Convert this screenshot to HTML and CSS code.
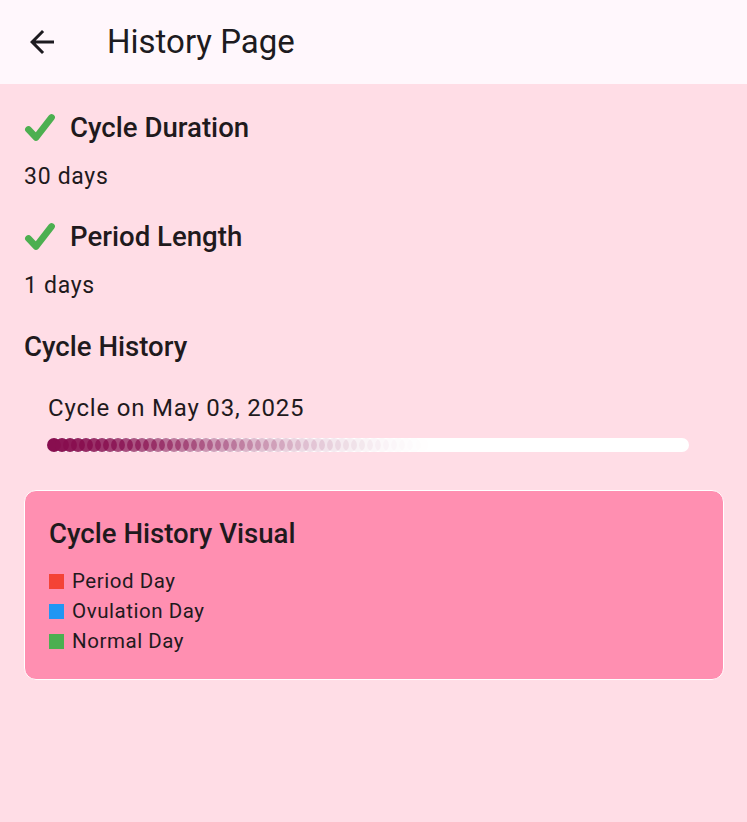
FILE: index.html
```html
<!DOCTYPE html>
<html>
<head>
<meta charset="utf-8">
<link rel="stylesheet" href="styles.css">
</head>
<body>
<header class="appbar">
  <div class="leading">
    <svg class="back" viewBox="0 0 24 24" width="36" height="36"><path d="M20 11H7.83l5.59-5.59L12 4l-8 8 8 8 1.41-1.41L7.83 13H20v-2z" fill="#1d1b20"/></svg>
  </div>
  <h1 class="title">History Page</h1>
</header>
<main class="content">
  <div class="heading-row">
    <svg class="check" viewBox="0 0 32 30" width="32" height="30"><path d="M4.5 16.5 L12 24.5 L27.5 4.5" fill="none" stroke="#4caf50" stroke-width="6.8" stroke-linecap="round" stroke-linejoin="round"/></svg>
    <h2 class="heading">Cycle Duration</h2>
  </div>
  <p class="value">30 days</p>
  <div class="heading-row second">
    <svg class="check" viewBox="0 0 32 30" width="32" height="30"><path d="M4.5 16.5 L12 24.5 L27.5 4.5" fill="none" stroke="#4caf50" stroke-width="6.8" stroke-linecap="round" stroke-linejoin="round"/></svg>
    <h2 class="heading">Period Length</h2>
  </div>
  <p class="value">1 days</p>
  <h2 class="heading section">Cycle History</h2>
  <div class="cycle">
    <p class="cycle-label">Cycle on May 03, 2025</p>
    <svg class="bar" viewBox="0 0 642 14" width="642" height="14">
      <rect x="0" y="0" width="642" height="14" rx="7" fill="#ffffff"/>
      <g fill="#880e4f">
        <circle cx="7" cy="7" r="7" opacity="1"/>
        <circle cx="15" cy="7" r="7" opacity=".97"/>
        <circle cx="23" cy="7" r="7" opacity=".94"/>
        <circle cx="31" cy="7" r="7" opacity=".91"/>
        <circle cx="39" cy="7" r="7" opacity=".88"/>
        <circle cx="47" cy="7" r="7" opacity=".85"/>
        <circle cx="55" cy="7" r="7" opacity=".82"/>
        <circle cx="63" cy="7" r="7" opacity=".79"/>
        <circle cx="71" cy="7" r="7" opacity=".76"/>
        <circle cx="79" cy="7" r="7" opacity=".73"/>
        <circle cx="87" cy="7" r="7" opacity=".70"/>
        <circle cx="95" cy="7" r="7" opacity=".67"/>
        <circle cx="103" cy="7" r="7" opacity=".64"/>
        <circle cx="111" cy="7" r="7" opacity=".61"/>
        <circle cx="119" cy="7" r="7" opacity=".58"/>
        <circle cx="127" cy="7" r="7" opacity=".55"/>
        <circle cx="135" cy="7" r="7" opacity=".52"/>
        <circle cx="143" cy="7" r="7" opacity=".49"/>
        <circle cx="151" cy="7" r="7" opacity=".46"/>
        <circle cx="159" cy="7" r="7" opacity=".43"/>
        <circle cx="167" cy="7" r="7" opacity=".40"/>
        <circle cx="175" cy="7" r="7" opacity=".375"/>
        <circle cx="183" cy="7" r="7" opacity=".35"/>
        <circle cx="191" cy="7" r="7" opacity=".325"/>
        <circle cx="199" cy="7" r="7" opacity=".30"/>
        <circle cx="207" cy="7" r="7" opacity=".275"/>
        <circle cx="215" cy="7" r="7" opacity=".25"/>
        <circle cx="223" cy="7" r="7" opacity=".23"/>
        <circle cx="231" cy="7" r="7" opacity=".21"/>
        <circle cx="239" cy="7" r="7" opacity=".19"/>
        <circle cx="247" cy="7" r="7" opacity=".17"/>
        <circle cx="255" cy="7" r="7" opacity=".15"/>
        <circle cx="263" cy="7" r="7" opacity=".135"/>
        <circle cx="271" cy="7" r="7" opacity=".12"/>
        <circle cx="279" cy="7" r="7" opacity=".105"/>
        <circle cx="287" cy="7" r="7" opacity=".09"/>
        <circle cx="295" cy="7" r="7" opacity=".078"/>
        <circle cx="303" cy="7" r="7" opacity=".066"/>
        <circle cx="311" cy="7" r="7" opacity=".055"/>
        <circle cx="319" cy="7" r="7" opacity=".045"/>
        <circle cx="327" cy="7" r="7" opacity=".036"/>
        <circle cx="335" cy="7" r="7" opacity=".028"/>
        <circle cx="343" cy="7" r="7" opacity=".021"/>
        <circle cx="351" cy="7" r="7" opacity=".015"/>
        <circle cx="359" cy="7" r="7" opacity=".01"/>
        <circle cx="367" cy="7" r="7" opacity=".006"/>
        <circle cx="375" cy="7" r="7" opacity=".003"/>
      </g>
    </svg>
  </div>
  <section class="card">
    <h2 class="heading card-title">Cycle History Visual</h2>
    <ul class="legend">
      <li class="legend-item"><span class="swatch period"></span>Period Day</li>
      <li class="legend-item"><span class="swatch ovulation"></span>Ovulation Day</li>
      <li class="legend-item"><span class="swatch normal"></span>Normal Day</li>
    </ul>
  </section>
</main>
</body>
</html>
```

FILE: styles.css
```css
html, body {
  margin: 0;
  padding: 0;
}
body {
  width: 747px;
  height: 822px;
  background: #ffdde6;
  font-family: Roboto, "Noto Sans", sans-serif;
  color: #1f1a1d;
  overflow: hidden;
}
.appbar {
  height: 84px;
  background: #fff7fc;
  display: flex;
  align-items: center;
}
.leading {
  width: 84px;
  height: 84px;
  display: flex;
  align-items: center;
  justify-content: center;
}
.back {
  display: block;
}
.title {
  margin: 0 0 0 23px;
  font-size: 33px;
  font-weight: 400;
  line-height: 40px;
  color: #1d1b20;
}
.content {
  padding: 24px 23px 0 24px;
}
.heading-row {
  display: flex;
  align-items: center;
  gap: 14px;
  height: 40px;
}
.heading-row.second {
  margin-top: 24px;
}
.check {
  display: block;
  flex: none;
}
.heading {
  margin: 0;
  font-size: 27.6px;
  font-weight: 500;
  line-height: 40px;
  color: #1f1a1d;
}
.value {
  margin: 13px 0 0;
  font-size: 23px;
  line-height: 32px;
  letter-spacing: 0.7px;
}
.section {
  margin-top: 25px;
}
.cycle {
  padding-left: 23px;
}
.cycle-label {
  margin: 25px 0 0 1px;
  font-size: 24px;
  line-height: 32px;
  letter-spacing: 0.8px;
}
.bar {
  display: block;
  margin-top: 14px;
}
.card {
  margin-top: 38px;
  background: #ff8fb1;
  border: 1px solid #ffffff;
  border-radius: 12px;
  padding: 23px 24px 23px 24px;
}
.legend {
  list-style: none;
  margin: 12px 0 0;
  padding: 0;
}
.legend-item {
  display: flex;
  align-items: center;
  gap: 8px;
  height: 30px;
  font-size: 20.5px;
  letter-spacing: 0.55px;
}
.swatch {
  width: 15px;
  height: 15px;
  flex: none;
}
.period { background: #f44336; }
.ovulation { background: #2196f3; }
.normal { background: #4caf50; }
```
